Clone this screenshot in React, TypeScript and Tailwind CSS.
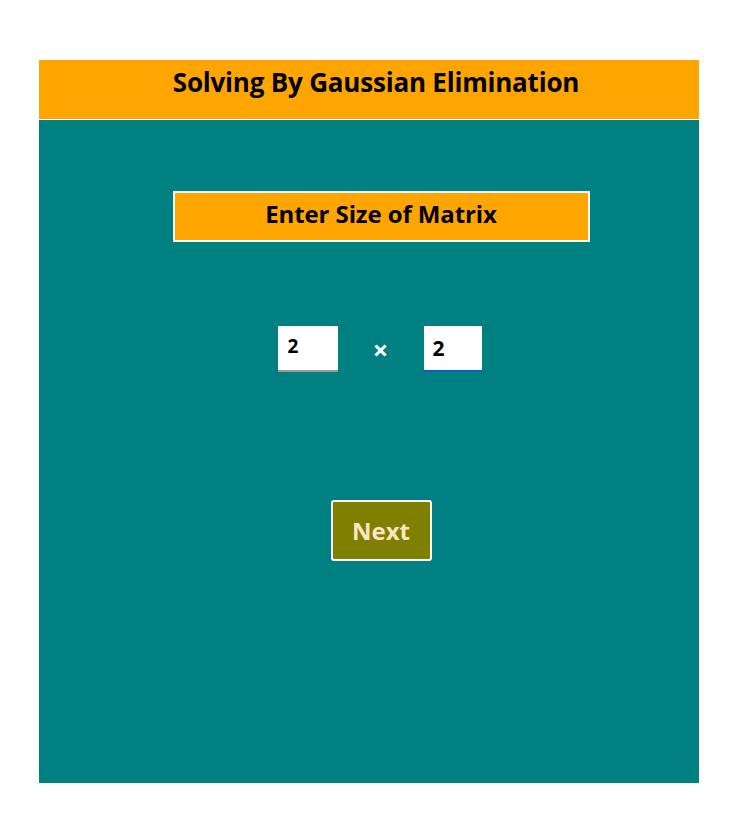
import { useState } from 'react';

export default function App() {
  const [rows, setRows] = useState('2');
  const [cols, setCols] = useState('2');

  return (
    <div className="min-h-[838px] bg-white pt-[60px] pl-[39px]" style={{ fontFamily: '"Open Sans", "Noto Sans", sans-serif' }}>
      <div className="w-[660px]">
        <div className="h-[60px] bg-[#ffa500] border-b border-white pt-[5px] pl-[14px] text-center">
          <h1 className="text-[26px] leading-[34px] font-bold tracking-[-0.2px] text-black">Solving By Gaussian Elimination</h1>
        </div>
        <div className="h-[663px] bg-[#008080] flex flex-col items-center pl-[24px] pt-[71px]">
          <div className="w-[417px] h-[51px] bg-[#ffa500] border-2 border-white pb-[5px] flex items-center justify-center">
            <span className="text-[24px] font-bold tracking-[-0.1px] text-black">Enter Size of Matrix</span>
          </div>
          <div className="mt-[84px] flex items-center pr-[3px]">
            <input
              value={rows}
              onChange={(e) => setRows(e.target.value)}
              className="w-[60px] h-[46px] bg-white border-b-2 border-[#9a9a9a] pl-[10px] pb-[4px] text-[19px] font-bold text-black outline-none"
            />
            <span className="w-[86px] text-center text-white text-[27px] leading-none font-bold">×</span>
            <input
              value={cols}
              onChange={(e) => setCols(e.target.value)}
              className="w-[58px] h-[46px] bg-white border-b-2 border-[#0a5fc4] pl-[9px] text-[21px] font-bold text-black outline-none"
            />
          </div>
          <button
            type="button"
            className="mt-[128px] w-[101px] h-[61px] bg-[#808000] border-2 border-white rounded-[3px] text-[24px] font-bold text-[#ffe4c4]"
          >
            Next
          </button>
        </div>
      </div>
    </div>
  );
}
